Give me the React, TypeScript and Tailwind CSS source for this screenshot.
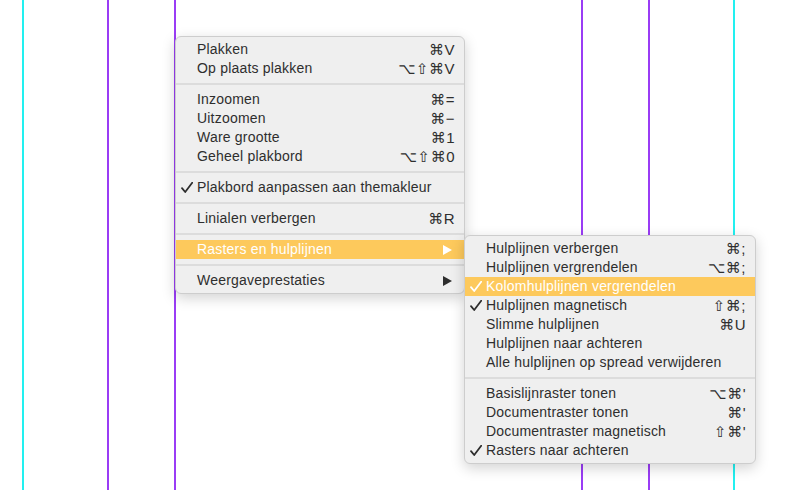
const font = { fontFamily: '"Liberation Sans", "DejaVu Sans", sans-serif' };

type Item =
  | { sep: true }
  | { label: string; key?: string; check?: boolean; active?: boolean; sub?: boolean; sep?: false };

const mainItems: Item[] = [
  { label: "Plakken", key: "⌘V" },
  { label: "Op plaats plakken", key: "⌥⇧⌘V" },
  { sep: true },
  { label: "Inzoomen", key: "⌘=" },
  { label: "Uitzoomen", key: "⌘−" },
  { label: "Ware grootte", key: "⌘1" },
  { label: "Geheel plakbord", key: "⌥⇧⌘0" },
  { sep: true },
  { label: "Plakbord aanpassen aan themakleur", check: true },
  { sep: true },
  { label: "Linialen verbergen", key: "⌘R" },
  { sep: true },
  { label: "Rasters en hulplijnen", sub: true, active: true },
  { sep: true },
  { label: "Weergaveprestaties", sub: true },
];

const subItems: Item[] = [
  { label: "Hulplijnen verbergen", key: "⌘;" },
  { label: "Hulplijnen vergrendelen", key: "⌥⌘;" },
  { label: "Kolomhulplijnen vergrendelen", check: true, active: true },
  { label: "Hulplijnen magnetisch", key: "⇧⌘;", check: true },
  { label: "Slimme hulplijnen", key: "⌘U" },
  { label: "Hulplijnen naar achteren" },
  { label: "Alle hulplijnen op spread verwijderen" },
  { sep: true },
  { label: "Basislijnraster tonen", key: "⌥⌘'" },
  { label: "Documentraster tonen", key: "⌘'" },
  { label: "Documentraster magnetisch", key: "⇧⌘'" },
  { label: "Rasters naar achteren", check: true },
];

function Check({ color }: { color: string }) {
  return (
    <svg width="12" height="11" viewBox="0 0 12 11">
      <path
        d="M1 6.2 L4.2 10 L11.2 0.8"
        fill="none"
        stroke={color}
        strokeWidth="1.8"
        strokeLinecap="round"
        strokeLinejoin="round"
      />
    </svg>
  );
}

function Menu({ items }: { items: Item[] }) {
  return (
    <div className="flex flex-col pt-[3px] pb-[3px]">
      {items.map((it, i) =>
        it.sep ? (
          <div key={i} className="flex h-[12px] items-center">
            <div className="h-[2px] w-full bg-[#dcdcdc]" />
          </div>
        ) : (
          <div
            key={i}
            className={`flex h-[19px] items-center pl-[5px] pr-[9px] text-[14px] leading-[19px] tracking-[0.2px] ${
              it.active ? "bg-[#fdc95c] text-white" : "text-[#2e2e2e]"
            }`}
          >
            <span className="flex w-[16px] shrink-0 items-center">
              {it.check && <Check color={it.active ? "#ffffff" : "#2e2e2e"} />}
            </span>
            <span className="flex-1 whitespace-nowrap">{it.label}</span>
            {it.key && (
              <span className="whitespace-nowrap text-[15px] tracking-[0.5px]">{it.key}</span>
            )}
            {it.sub && (
              <svg width="9" height="10" viewBox="0 0 9 10" className="mr-[3px]">
                <path d="M0 0 L9 5 L0 10 Z" fill={it.active ? "#ffffff" : "#2e2e2e"} />
              </svg>
            )}
          </div>
        )
      )}
    </div>
  );
}

export default function App() {
  const lines = [
    { x: 22, c: "bg-[#22f0f0]" },
    { x: 107, c: "bg-[#9a3cf5]" },
    { x: 174, c: "bg-[#9a3cf5]" },
    { x: 581, c: "bg-[#9a3cf5]" },
    { x: 648, c: "bg-[#9a3cf5]" },
    { x: 733, c: "bg-[#22f0f0]" },
  ];
  return (
    <div className="relative h-[490px] w-[797px] overflow-hidden bg-white" style={font}>
      {lines.map((l) => (
        <div key={l.x} className={`absolute top-0 h-full w-[2px] ${l.c}`} style={{ left: l.x }} />
      ))}
      <div className="absolute left-[175px] top-[36px] w-[290px] overflow-hidden rounded-[6px] border border-[#cdcdcd] bg-[#efefef] shadow-[0_4px_14px_rgba(0,0,0,0.18)]">
        <Menu items={mainItems} />
      </div>
      <div className="absolute left-[464px] top-[235px] w-[292px] overflow-hidden rounded-[6px] border border-[#cdcdcd] bg-[#efefef] shadow-[0_4px_14px_rgba(0,0,0,0.18)]">
        <Menu items={subItems} />
      </div>
    </div>
  );
}
